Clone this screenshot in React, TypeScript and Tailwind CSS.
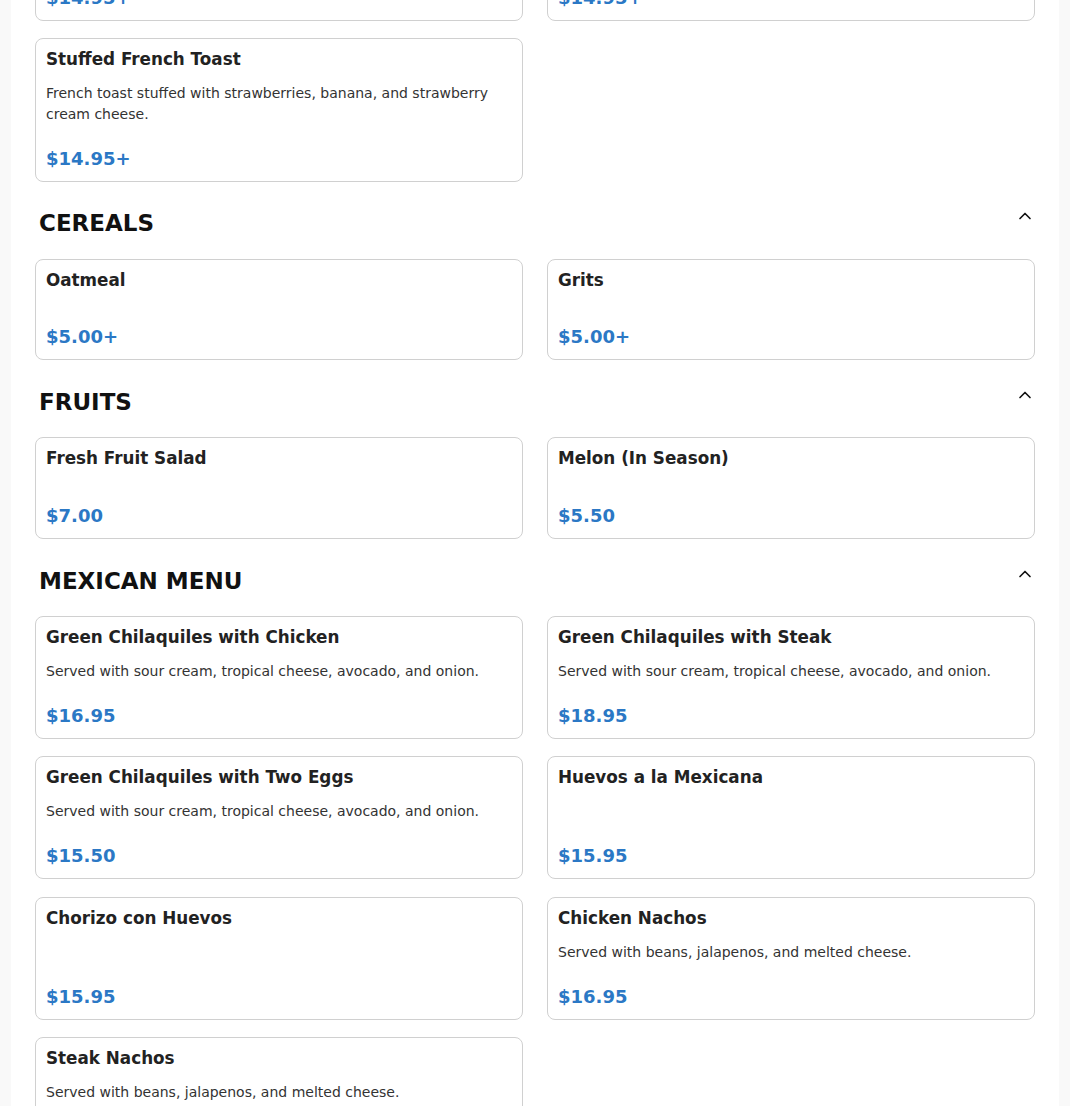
import { ChevronUp } from "lucide-react";

type Item = {
  name: string;
  description?: string;
  price: string;
};

type Section = {
  title: string;
  items: Item[];
};

// row that sits above the fold (only the bottom of these cards shows)
const topRow: Item[] = [
  { name: "French Toast", description: "Served with butter and syrup.", price: "$14.95+" },
  { name: "Pancakes", description: "Served with butter and syrup.", price: "$14.95+" },
];

const sections: Section[] = [
  {
    title: "Cereals",
    items: [
      { name: "Oatmeal", price: "$5.00+" },
      { name: "Grits", price: "$5.00+" },
    ],
  },
  {
    title: "Fruits",
    items: [
      { name: "Fresh Fruit Salad", price: "$7.00" },
      { name: "Melon (In Season)", price: "$5.50" },
    ],
  },
  {
    title: "Mexican Menu",
    items: [
      {
        name: "Green Chilaquiles with Chicken",
        description: "Served with sour cream, tropical cheese, avocado, and onion.",
        price: "$16.95",
      },
      {
        name: "Green Chilaquiles with Steak",
        description: "Served with sour cream, tropical cheese, avocado, and onion.",
        price: "$18.95",
      },
      {
        name: "Green Chilaquiles with Two Eggs",
        description: "Served with sour cream, tropical cheese, avocado, and onion.",
        price: "$15.50",
      },
      { name: "Huevos a la Mexicana", price: "$15.95" },
      { name: "Chorizo con Huevos", price: "$15.95" },
      {
        name: "Chicken Nachos",
        description: "Served with beans, jalapenos, and melted cheese.",
        price: "$16.95",
      },
      {
        name: "Steak Nachos",
        description: "Served with beans, jalapenos, and melted cheese.",
        price: "$16.95",
      },
    ],
  },
];

function MenuCard({ item }: { item: Item }) {
  return (
    <div className="flex flex-col rounded-lg border border-[#d0d0d0] bg-white px-[10px] pt-[12px] pb-[13px]">
      <h3 className="text-[16.8px] font-bold leading-none text-[#222]">{item.name}</h3>
      <p className="mt-[15px] text-sm leading-[21px] text-[#333]">{item.description}</p>
      <span className="mt-auto pt-[25px] text-[18px] font-bold leading-none text-[#2b78c5]">
        {item.price}
      </span>
    </div>
  );
}

export default function App() {
  return (
    <div
      className="min-h-screen overflow-hidden bg-[#f9f9f9]"
      style={{ fontFamily: '"DejaVu Sans", Verdana, sans-serif' }}
    >
      <div className="mx-auto flex max-w-[1048px] flex-col bg-white px-6 pb-6">
        <div className="-mt-[102px] grid grid-cols-2 gap-x-6">
          {topRow.map((item) => (
            <MenuCard key={item.name} item={item} />
          ))}
        </div>

        <div className="mt-[17px] grid grid-cols-2 gap-x-6">
          <MenuCard
            item={{
              name: "Stuffed French Toast",
              description:
                "French toast stuffed with strawberries, banana, and strawberry cream cheese.",
              price: "$14.95+",
            }}
          />
        </div>

        {sections.map((section) => (
          <section key={section.title} className="mt-[23.5px]">
            <div className="flex h-9 items-center justify-between pl-1">
              <h2 className="text-[23px] font-bold uppercase leading-9 text-[#111]">
                {section.title}
              </h2>
              <ChevronUp size={20} strokeWidth={2} className="-mt-[14px] text-[#111]" />
            </div>
            <div className="mt-[17.5px] grid grid-cols-2 gap-x-6 gap-y-[17.5px]">
              {section.items.map((item) => (
                <MenuCard key={item.name} item={item} />
              ))}
            </div>
          </section>
        ))}
      </div>
    </div>
  );
}
